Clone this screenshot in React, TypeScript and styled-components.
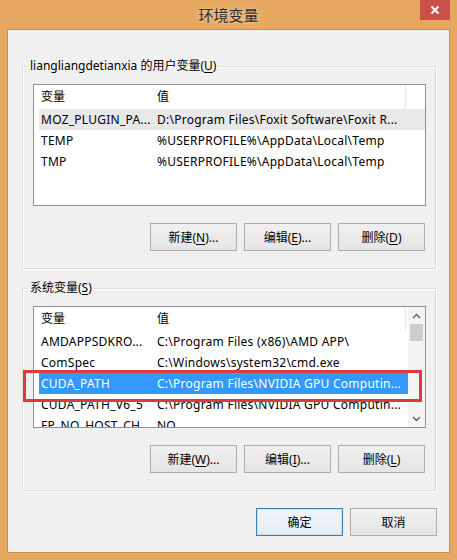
import React from "react";
import styled, { createGlobalStyle } from "styled-components";

const GlobalStyle = createGlobalStyle`
  html, body { margin: 0; padding: 0; background: #ffffff; }
  body { font-family: "Noto Sans", "Noto Sans CJK SC", sans-serif; }
`;

const FONT = `"Noto Sans", "Noto Sans CJK SC", sans-serif`;

const Window = styled.div`
  width: 457px;
  height: 560px;
  box-sizing: border-box;
  background: #e6a860;
  padding: 0 7px 7px 7px;
  display: flex;
  flex-direction: column;
  font-family: ${FONT};
  font-size: 12px;
  color: #000;
`;

const TitleBar = styled.div`
  height: 29px;
  display: grid;
  grid-template-columns: 1fr auto 1fr;
`;

const Title = styled.div`
  grid-column: 2;
  align-self: center;
  font-family: "Noto Sans CJK SC", sans-serif;
  font-size: 15px;
  line-height: 30px;
  color: #2e2e2e;
  text-shadow: 0 0 6px rgba(255, 240, 220, 0.8);
`;

const CloseButton = styled.div`
  grid-column: 3;
  justify-self: end;
  align-self: start;
  width: 30px;
  height: 20px;
  background: #c9504b;
  display: flex;
  align-items: center;
  justify-content: center;
`;

const Client = styled.div`
  flex: 1;
  background: #f0f0f0;
  border: 1px solid #c98f4e;
  padding: 0 0 16px 0;
  display: flex;
  flex-direction: column;
`;

const Group = styled.fieldset<{ $first?: boolean }>`
  margin: ${(p) => (p.$first ? "27px" : "10px")} 13px 0 14px;
  padding: 9px 9px 17px 10px;
  border: 1px solid #dcdcdc;
  box-shadow: inset 1px 1px 0 #ffffff, 1px 1px 0 #ffffff;
  min-inline-size: 0;
`;

const Legend = styled.legend`
  margin-left: -5px;
  padding: 0 2px;
  line-height: 18px;
  font-size: 12px;
  color: #000;
`;

const List = styled.div`
  position: relative;
  height: 122px;
  box-sizing: border-box;
  border: 1px solid #8e9096;
  background: #ffffff;
  display: flex;
`;

const ListBody = styled.div`
  flex: 1;
  overflow: hidden;
  padding-left: 5px;
`;

const HeaderRow = styled.div`
  display: grid;
  grid-template-columns: 116px 251px;
  height: 24px;
`;

const HeaderCell = styled.div<{ $divider?: boolean }>`
  padding-left: 2px;
  line-height: 24px;
  border-right: 1px solid ${(p) => (p.$divider ? "#e8e8e8" : "transparent")};
  white-space: nowrap;
  overflow: hidden;
`;

const Row = styled.div<{ $state?: "hover" | "selected" }>`
  display: grid;
  grid-template-columns: 116px 251px;
  height: 21px;
  background: ${(p) =>
    p.$state === "selected" ? "#3399ff" : p.$state === "hover" ? "#e8e8e8" : "transparent"};
  color: ${(p) => (p.$state === "selected" ? "#ffffff" : "#000000")};
`;

const Cell = styled.div`
  padding-left: 2px;
  line-height: 21px;
  letter-spacing: 0.25px;
  white-space: nowrap;
  overflow: hidden;
`;

const ScrollBar = styled.div`
  width: 17px;
  background: #f4f4f4;
  display: flex;
  flex-direction: column;
`;

const ScrollArrow = styled.div`
  height: 17px;
  display: flex;
  align-items: center;
  justify-content: center;
`;

const ScrollTrack = styled.div`
  flex: 1;
  padding: 0 2px;
`;

const ScrollThumb = styled.div`
  height: 17px;
  background: #cdcdcd;
`;

const Highlight = styled.div`
  position: absolute;
  left: -11px;
  top: 63px;
  width: 399px;
  height: 32px;
  box-sizing: border-box;
  border: 3px solid #dc3a40;
  pointer-events: none;
`;

const ButtonRow = styled.div`
  display: flex;
  justify-content: flex-end;
  gap: 7px;
  margin-top: 17px;
  padding-right: 1px;
`;

const Footer = styled.div`
  display: flex;
  justify-content: flex-end;
  gap: 7px;
  margin-top: 17px;
  padding-right: 12px;
`;

const Button = styled.div<{ $primary?: boolean }>`
  width: 87px;
  height: 28px;
  box-sizing: border-box;
  border: 1px solid ${(p) => (p.$primary ? "#3c7fb1" : "#acacac")};
  background: ${(p) =>
    p.$primary
      ? "linear-gradient(#f2f7fb, #e3ecf3)"
      : "linear-gradient(#f0f0f0, #e5e5e5)"};
  box-shadow: ${(p) => (p.$primary ? "inset 0 0 0 1px #c9e0f2" : "none")};
  display: flex;
  align-items: center;
  justify-content: center;
  font-size: 12px;
  color: #000;
`;

const U = styled.span`
  text-decoration: underline;
  text-underline-offset: 2px;
`;

const Chevron = ({ up }: { up?: boolean }) => (
  <svg width="9" height="6" viewBox="0 0 9 6">
    <polyline
      points={up ? "1,5 4.5,1.5 8,5" : "1,1 4.5,4.5 8,1"}
      fill="none"
      stroke="#606060"
      strokeWidth="1.4"
    />
  </svg>
);

type RowData = { name: string; value: string; state?: "hover" | "selected" };

const userVars: RowData[] = [
  { name: "MOZ_PLUGIN_PA...", value: "D:\\Program Files\\Foxit Software\\Foxit R...", state: "hover" },
  { name: "TEMP", value: "%USERPROFILE%\\AppData\\Local\\Temp" },
  { name: "TMP", value: "%USERPROFILE%\\AppData\\Local\\Temp" },
];

const sysVars: RowData[] = [
  { name: "AMDAPPSDKRO...", value: "C:\\Program Files (x86)\\AMD APP\\" },
  { name: "ComSpec", value: "C:\\Windows\\system32\\cmd.exe" },
  { name: "CUDA_PATH", value: "C:\\Program Files\\NVIDIA GPU Computin...", state: "selected" },
  { name: "CUDA_PATH_V6_5", value: "C:\\Program Files\\NVIDIA GPU Computin..." },
  { name: "FP_NO_HOST_CH...", value: "NO" },
];

const VarList = ({ rows, scroll, children }: { rows: RowData[]; scroll?: boolean; children?: React.ReactNode }) => (
  <List>
    <ListBody>
      <HeaderRow>
        <HeaderCell>变量</HeaderCell>
        <HeaderCell $divider>值</HeaderCell>
      </HeaderRow>
      {rows.map((r) => (
        <Row key={r.name} $state={r.state}>
          <Cell>{r.name}</Cell>
          <Cell>{r.value}</Cell>
        </Row>
      ))}
    </ListBody>
    {scroll && (
      <ScrollBar>
        <ScrollArrow>
          <Chevron up />
        </ScrollArrow>
        <ScrollTrack>
          <ScrollThumb />
        </ScrollTrack>
        <ScrollArrow>
          <Chevron />
        </ScrollArrow>
      </ScrollBar>
    )}
    {children}
  </List>
);

export default function App() {
  return (
    <>
      <GlobalStyle />
      <Window>
        <TitleBar>
          <Title>环境变量</Title>
          <CloseButton>
            <svg width="10" height="10" viewBox="0 0 10 10">
              <path d="M1.5 1.5 L8.5 8.5 M8.5 1.5 L1.5 8.5" stroke="#ffffff" strokeWidth="2" />
            </svg>
          </CloseButton>
        </TitleBar>
        <Client>
          <Group $first>
            <Legend>
              liangliangdetianxia 的用户变量(<U>U</U>)
            </Legend>
            <VarList rows={userVars} />
            <ButtonRow>
              <Button>
                新建(<U>N</U>)...
              </Button>
              <Button>
                编辑(<U>E</U>)...
              </Button>
              <Button>
                删除(<U>D</U>)
              </Button>
            </ButtonRow>
          </Group>
          <Group>
            <Legend>
              系统变量(<U>S</U>)
            </Legend>
            <VarList rows={sysVars} scroll>
              <Highlight />
            </VarList>
            <ButtonRow>
              <Button>
                新建(<U>W</U>)...
              </Button>
              <Button>
                编辑(<U>I</U>)...
              </Button>
              <Button>
                删除(<U>L</U>)
              </Button>
            </ButtonRow>
          </Group>
          <Footer>
            <Button $primary>确定</Button>
            <Button>取消</Button>
          </Footer>
        </Client>
      </Window>
    </>
  );
}
